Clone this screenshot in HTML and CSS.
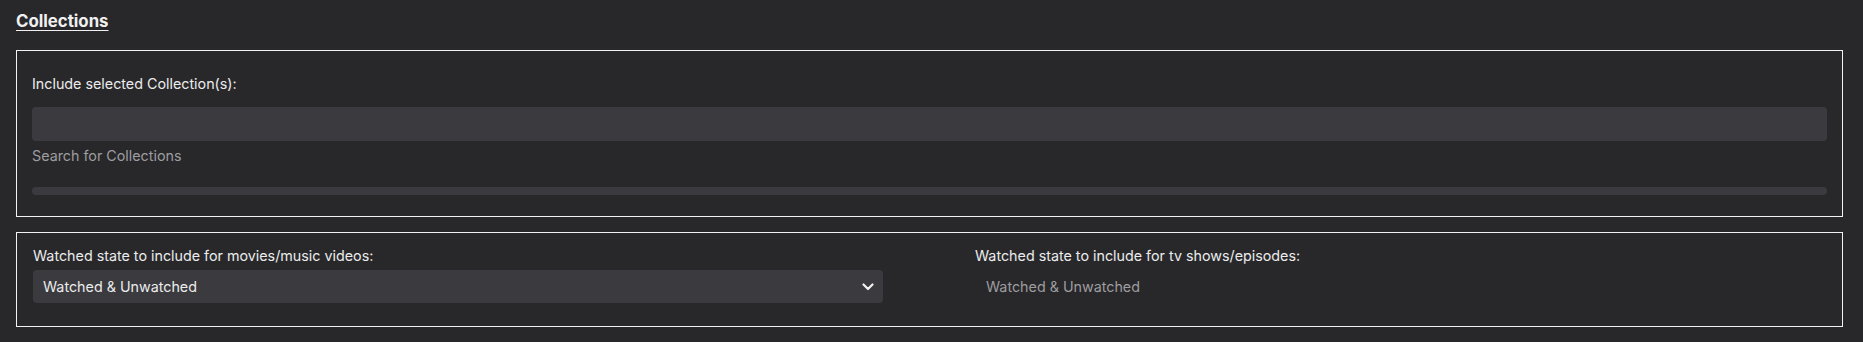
FILE: index.html
```html
<!DOCTYPE html>
<html lang="en">
<head>
    <meta charset="UTF-8" />
    <meta name="viewport" content="width=device-width, initial-scale=1.0"/>
    <title>Collections</title>
    <link rel="stylesheet" href="styles.css">
</head>
<body>
    <section class="filters">
        <h3 class="section-title">Collections</h3>

        <div class="panel panel-collections">
            <label class="field-label" for="collections">Include selected Collection(s):</label>
            <input class="text-input" id="collections" type="text">
            <div class="hint">Search for Collections</div>
            <div class="results-bar"></div>
        </div>

        <div class="panel panel-watched">
            <div class="field">
                <label class="field-label" for="watched-movies">Watched state to include for movies/music videos:</label>
                <div class="select-wrap">
                    <select class="select" id="watched-movies">
                        <option>Watched &amp; Unwatched</option>
                        <option>Watched</option>
                        <option>Unwatched</option>
                    </select>
                    <svg class="chevron" viewBox="0 0 12 8" width="12" height="8">
                        <path d="M1.5 1.5 L6 6 L10.5 1.5" fill="none" stroke="#f2f2f2" stroke-width="2.2" stroke-linecap="round" stroke-linejoin="round"/>
                    </svg>
                </div>
            </div>
            <div class="field">
                <label class="field-label" for="watched-shows">Watched state to include for tv shows/episodes:</label>
                <select class="select select-disabled" id="watched-shows" disabled>
                    <option>Watched &amp; Unwatched</option>
                </select>
            </div>
        </div>
    </section>
</body>
</html>
```

FILE: styles.css
```css
body {
    margin: 0;
    background: #28282b;
    color: #ececec;
    font-family: Inter, "Noto Sans", sans-serif;
    font-size: 14.3px;
}

.filters {
    padding: 10px 20px 0 16px;
}

.section-title {
    margin: 0 0 18px 0;
    font-size: 16.8px;
    font-weight: 700;
    line-height: 22px;
    text-decoration: underline;
    text-underline-offset: 3px;
    color: #f0f0f0;
}

.panel {
    border: 1px solid #f2f2f2;
}

.panel-collections {
    display: flex;
    flex-direction: column;
    padding: 24px 15px 21px 15px;
}

.field-label {
    display: block;
    line-height: 18px;
    color: #ececec;
}

.text-input {
    margin-top: 14px;
    height: 34px;
    box-sizing: border-box;
    border: none;
    border-radius: 4px;
    background: #3a3a3f;
    color: #ececec;
    font: inherit;
    padding: 0 10px;
    outline: none;
}

.hint {
    margin-top: 6px;
    line-height: 18px;
    color: #9d9d9f;
}

.results-bar {
    margin-top: 22px;
    height: 8px;
    border-radius: 4px;
    background: #3a3a3f;
}

.panel-watched {
    margin-top: 15px;
    display: grid;
    grid-template-columns: 850px 1fr;
    column-gap: 92px;
    padding: 14px 16px 23px 16px;
}

.field .field-label {
    margin-bottom: 5px;
}

.select-wrap {
    position: relative;
}

.select {
    appearance: none;
    -webkit-appearance: none;
    width: 100%;
    height: 33px;
    border: none;
    border-radius: 4px;
    background: #3a3a3f;
    color: #ececec;
    font: inherit;
    padding: 0 10px;
    outline: none;
}

.select-disabled {
    background: transparent;
    color: #9d9d9f;
    padding: 0 11px;
    opacity: 1;
}

.chevron {
    position: absolute;
    right: 9px;
    top: 13px;
    pointer-events: none;
}
```
